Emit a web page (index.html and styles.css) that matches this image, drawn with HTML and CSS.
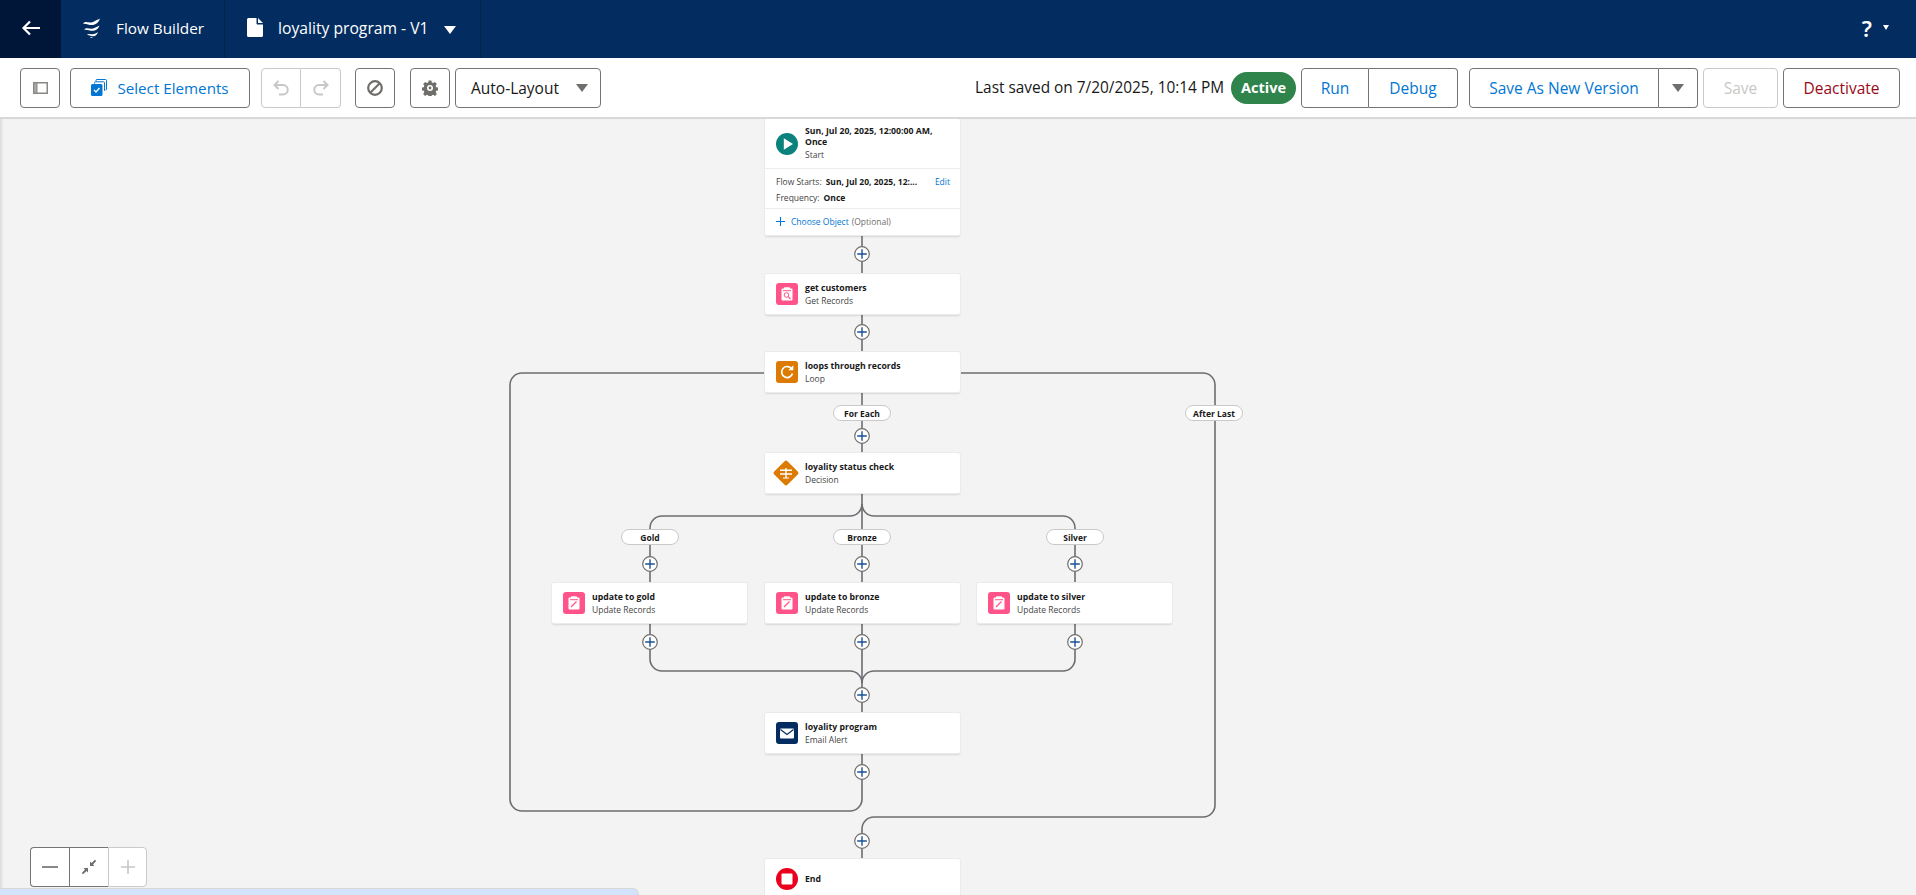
FILE: index.html
```html
<!DOCTYPE html>
<html lang="en">
<head>
<meta charset="UTF-8">
<title>Flow Builder</title>
<link rel="stylesheet" href="styles.css">
</head>
<body>

<svg class="icon-defs" width="0" height="0">
    <symbol id="i-clipboard" viewBox="0 0 22 22">
        <rect width="22" height="22" rx="3" fill="#ff538a"/>
        <path d="M6.5 5.5h1.5v-.5a.8.8 0 0 1 .8-.8h4.4a.8.8 0 0 1 .8.8v.5h1.5a1 1 0 0 1 1 1v10a1 1 0 0 1-1 1h-9a1 1 0 0 1-1-1v-10a1 1 0 0 1 1-1z" fill="#fff"/>
        <rect x="7" y="7.2" width="8" height="1" fill="#ff538a"/>
    </symbol>
    <symbol id="i-plus" viewBox="0 0 16 16">
        <circle cx="8" cy="8" r="7.3" fill="#fff" stroke="#706e6b" stroke-width="1.2"/>
        <path d="M8 3.200v9.600M3.200 8h9.600" stroke="#1b5297" stroke-width="1.400" fill="none"/>
    </symbol>
</svg>

<header class="app-header">
    <a class="app-header__back">
        <svg width="20" height="16" viewBox="0 0 20 16"><path d="M9 1.5 2.5 8 9 14.500M3 8h16" fill="none" stroke="#fff" stroke-width="2.200"/></svg>
    </a>
    <div class="app-header__section app-header__section--app">
        <svg class="flow-logo" width="19" height="20" viewBox="0 0 19 20"><path d="M1 6C3 1.500 7 6.500 12 3.500 14.500 2 16.500 1.500 18 .5 17 4 14 6.500 11 7 7.500 7.700 4 5 1 6zM2 12C4.500 8 8 12.500 13 9.800 15 8.700 16.500 8.300 17.500 7.500 16.500 11 14 12.300 11.500 12.800 8 13.300 5 11 2 12zM5 17C7 14.500 10 17.500 13.500 15.500 14.500 15 15.500 14.500 16 14 15 17 13 18 11.500 18.200 9.500 18.500 7 16.500 5 17zM8 19.800c1-.8 2-.3 3-.4-.8.600-2 .900-3 .4z" fill="#fff"/></svg>
        <span>Flow Builder</span>
    </div>
    <div class="app-header__section app-header__section--title">
        <svg width="16" height="19" viewBox="0 0 16 19"><path d="M1.500 0H9.500V5.500a1 1 0 0 0 1 1H16V17.500a1.500 1.500 0 0 1-1.500 1.500H1.500A1.500 1.500 0 0 1 0 17.500V1.500A1.500 1.500 0 0 1 1.500 0zM11 0l5 5h-5z" fill="#fff"/></svg>
        <span class="app-header__title">loyality program - V1</span>
        <span class="caret caret--white"></span>
    </div>
    <div class="app-header__help">
        <span class="help-mark">?</span>
        <span class="caret caret--small"></span>
    </div>
</header>

<div class="toolbar">
    <button class="btn btn--icon toolbar__panel">
        <svg width="15" height="12" viewBox="0 0 15 12"><rect width="15" height="12" fill="#8a8886"/><rect x="4.500" y="1.500" width="9" height="9" fill="#fff"/><rect x="1.200" y="1.500" width="2.300" height="9" fill="#a8a8a8"/></svg>
    </button>
    <button class="btn btn--blue toolbar__select">
        <svg width="16" height="17" viewBox="0 0 16 17"><path d="M5 2.500V1.500A1 1 0 0 1 6 .5h8.500a1 1 0 0 1 1 1V10a1 1 0 0 1-1 1" fill="none" stroke="#0176d3" stroke-width="1"/><path d="M3.500 4.500V3.800a1 1 0 0 1 1-1h8a1 1 0 0 1 1 1v8" fill="none" stroke="#0176d3" stroke-width="1"/><rect y="5" width="11.500" height="12" rx="1.500" fill="#0176d3"/><path d="M3 11l2 2 3.500-4" fill="none" stroke="#fff" stroke-width="1.300"/></svg>
        Select Elements
    </button>
    <div class="btn-group btn-group--disabled toolbar__history">
        <button class="btn btn--icon">
            <svg width="16" height="16" viewBox="0 0 16 16"><path d="M5.500 1 1.500 5l4 4M2 5h8a4.500 4.500 0 0 1 0 9.500H6" fill="none" stroke="#c9c7c5" stroke-width="2"/></svg>
        </button>
        <button class="btn btn--icon">
            <svg width="16" height="16" viewBox="0 0 16 16"><path d="M10.500 1l4 4-4 4M14 5H6a4.500 4.500 0 0 0 0 9.500h4" fill="none" stroke="#c9c7c5" stroke-width="2"/></svg>
        </button>
    </div>
    <button class="btn btn--icon toolbar__stop">
        <svg width="16" height="16" viewBox="0 0 16 16"><circle cx="8" cy="8" r="6.800" fill="none" stroke="#706e6b" stroke-width="2.200"/><path d="M3.500 12.500l9-9" stroke="#706e6b" stroke-width="2.200"/></svg>
    </button>
    <button class="btn btn--icon toolbar__gear">
        <svg width="16" height="16" viewBox="0 0 16 16"><path fill-rule="evenodd" d="M6.600.5h2.800l.4 2 1.300.6 1.800-1 1.900 2-1.100 1.700.5 1.400 2 .4v2.800l-2 .4-.5 1.300 1.100 1.800-1.900 2-1.800-1.100-1.300.5-.4 2H6.600l-.4-2-1.300-.5-1.800 1.100-1.900-2 1.100-1.800-.5-1.300-2-.4V7.600l2-.4.500-1.400-1.100-1.700 1.900-2 1.800 1 1.300-.6zM8 5a3 3 0 1 0 0 6 3 3 0 0 0 0-6z" fill="#706e6b"/><circle cx="8" cy="8" r="1.400" fill="#706e6b"/></svg>
    </button>
    <button class="btn toolbar__layout">
        Auto-Layout
        <span class="caret caret--grey"></span>
    </button>

    <div class="toolbar__right">
        <span class="last-saved">Last saved on 7/20/2025, 10:14 PM</span>
        <span class="status-pill">Active</span>
        <div class="btn-group toolbar__run">
            <button class="btn btn--blue toolbar__run-btn">Run</button>
            <button class="btn btn--blue toolbar__debug-btn">Debug</button>
        </div>
        <div class="btn-group toolbar__version">
            <button class="btn btn--blue toolbar__version-btn">Save As New Version</button>
            <button class="btn btn--icon toolbar__version-menu"><span class="caret caret--grey"></span></button>
        </div>
        <button class="btn btn--disabled toolbar__save">Save</button>
        <button class="btn btn--red toolbar__deactivate">Deactivate</button>
    </div>
</div>

<main class="canvas">

    <!-- connectors, viewBox uses page coordinates -->
    <svg class="canvas__lines" width="1916" height="776" viewBox="0 119 1916 776">
        <g fill="none" stroke="#6b6d70" stroke-width="1.600">
            <path d="M862 235V352M862 392V453M862 493V583M862 623V713M862 753V771"/>
            <path d="M765 373H522A12 12 0 0 0 510 385V799A12 12 0 0 0 522 811H850A12 12 0 0 0 862 799V771"/>
            <path d="M959 373H1203A12 12 0 0 1 1215 385V805A12 12 0 0 1 1203 817H874A12 12 0 0 0 862 829V859"/>
            <path d="M862 504A12 12 0 0 1 850 516H662A12 12 0 0 0 650 528V583"/>
            <path d="M862 504A12 12 0 0 0 874 516H1063A12 12 0 0 1 1075 528V583"/>
            <path d="M650 623V659A12 12 0 0 0 662 671H850A12 12 0 0 1 862 683"/>
            <path d="M1075 623V659A12 12 0 0 1 1063 671H874A12 12 0 0 0 862 683"/>
        </g>
        <use href="#i-plus" x="854" y="246" width="16" height="16"/>
        <use href="#i-plus" x="854" y="324" width="16" height="16"/>
        <use href="#i-plus" x="854" y="428" width="16" height="16"/>
        <use href="#i-plus" x="642" y="556" width="16" height="16"/>
        <use href="#i-plus" x="854" y="556" width="16" height="16"/>
        <use href="#i-plus" x="1067" y="556" width="16" height="16"/>
        <use href="#i-plus" x="642" y="634" width="16" height="16"/>
        <use href="#i-plus" x="854" y="634" width="16" height="16"/>
        <use href="#i-plus" x="1067" y="634" width="16" height="16"/>
        <use href="#i-plus" x="854" y="687" width="16" height="16"/>
        <use href="#i-plus" x="854" y="764" width="16" height="16"/>
        <use href="#i-plus" x="854" y="833" width="16" height="16"/>
    </svg>

    <!-- start element -->
    <div class="node node--start">
        <div class="node__head node__head--start">
            <svg class="node__icon" viewBox="0 0 22 22"><circle cx="11" cy="11" r="11" fill="#0b827c"/><path d="M7.800 5.300 17 11l-9.200 5.700z" fill="#fff"/></svg>
            <div class="node__text">
                <div class="node__title">Sun, Jul 20, 2025, 12:00:00 AM, Once</div>
                <div class="node__sub">Start</div>
            </div>
        </div>
        <div class="node__details">
            <div class="detail-row">
                <span>Flow Starts:</span>
                <b>Sun, Jul 20, 2025, 12:...</b>
                <a class="link detail-row__edit">Edit</a>
            </div>
            <div class="detail-row">
                <span>Frequency:</span>
                <b>Once</b>
            </div>
        </div>
        <div class="node__foot">
            <svg width="9" height="9" viewBox="0 0 9 9"><path d="M4.500 0v9M0 4.500h9" stroke="#0176d3" stroke-width="1.100"/></svg>
            <a class="link">Choose Object</a>
            <span class="node__optional">(Optional)</span>
        </div>
    </div>

    <div class="node node--get">
        <svg class="node__icon" viewBox="0 0 22 22"><use href="#i-clipboard"/><circle cx="10.500" cy="12" r="2.300" fill="none" stroke="#ff538a" stroke-width="1"/><path d="M12.200 13.700 14.500 16" stroke="#ff538a" stroke-width="1.100"/></svg>
        <div class="node__text">
            <div class="node__title">get customers</div>
            <div class="node__sub">Get Records</div>
        </div>
    </div>

    <div class="node node--loop">
        <svg class="node__icon" viewBox="0 0 22 22"><rect width="22" height="22" rx="3" fill="#dd7a01"/><path d="M15.800 8A5.500 5.500 0 1 0 16.500 12.500" fill="none" stroke="#fff" stroke-width="1.700"/><path d="M17.300 4.300V9.300H12.300z" fill="#fff"/></svg>
        <div class="node__text">
            <div class="node__title">loops through records</div>
            <div class="node__sub">Loop</div>
        </div>
    </div>

    <div class="node node--decision">
        <svg class="node__icon node__icon--wide" viewBox="0 0 26 26"><rect x="3.700" y="3.700" width="18.600" height="18.600" rx="2" transform="rotate(45 13 13)" fill="#dd7a01"/><path d="M7 9.500h12v1.600H7zM7 13.200h12v1.600H7zM12.300 8h1.400v9.500h-1.400zM10 17.500h6v1h-6z" fill="#fff"/></svg>
        <div class="node__text">
            <div class="node__title">loyality status check</div>
            <div class="node__sub">Decision</div>
        </div>
    </div>

    <div class="node node--gold">
        <svg class="node__icon" viewBox="0 0 22 22"><use href="#i-clipboard"/><path d="M8 15l5.500-5.500" stroke="#ff538a" stroke-width="1.300"/></svg>
        <div class="node__text">
            <div class="node__title">update to gold</div>
            <div class="node__sub">Update Records</div>
        </div>
    </div>

    <div class="node node--bronze">
        <svg class="node__icon" viewBox="0 0 22 22"><use href="#i-clipboard"/><path d="M8 15l5.500-5.500" stroke="#ff538a" stroke-width="1.300"/></svg>
        <div class="node__text">
            <div class="node__title">update to bronze</div>
            <div class="node__sub">Update Records</div>
        </div>
    </div>

    <div class="node node--silver">
        <svg class="node__icon" viewBox="0 0 22 22"><use href="#i-clipboard"/><path d="M8 15l5.500-5.500" stroke="#ff538a" stroke-width="1.300"/></svg>
        <div class="node__text">
            <div class="node__title">update to silver</div>
            <div class="node__sub">Update Records</div>
        </div>
    </div>

    <div class="node node--email">
        <svg class="node__icon" viewBox="0 0 22 22"><rect width="22" height="22" rx="3" fill="#032d60"/><rect x="4" y="6.500" width="14" height="10" rx="1" fill="#fff"/><path d="M4.500 7.500 11 12.500l6.500-5" fill="none" stroke="#032d60" stroke-width="1.200"/></svg>
        <div class="node__text">
            <div class="node__title">loyality program</div>
            <div class="node__sub">Email Alert</div>
        </div>
    </div>

    <div class="node node--end">
        <svg class="node__icon" viewBox="0 0 22 22"><circle cx="11" cy="11" r="11" fill="#ea001e"/><rect x="5.500" y="5.500" width="11" height="11" rx="1" fill="#fff"/></svg>
        <div class="node__text">
            <div class="node__title">End</div>
        </div>
    </div>

    <span class="pill pill--each">For Each</span>
    <span class="pill pill--last">After Last</span>
    <span class="pill pill--gold">Gold</span>
    <span class="pill pill--bronze">Bronze</span>
    <span class="pill pill--silver">Silver</span>

    <!-- zoom panel -->
    <div class="zoom">
        <button class="zoom__btn">
            <svg width="16" height="2" viewBox="0 0 16 2"><rect width="16" height="2" fill="#8a8886"/></svg>
        </button>
        <button class="zoom__btn">
            <svg width="16" height="16" viewBox="0 0 16 16"><path d="M9 7V2.500l1.500 1.500L14 .8 15.200 2 12 5.500 13.500 7zM7 9v4.500L5.500 12 2 15.200.8 14 4 10.500 2.500 9z" fill="#706e6b"/></svg>
        </button>
        <button class="zoom__btn zoom__btn--disabled">
            <svg width="16" height="16" viewBox="0 0 16 16"><path d="M8 1v14M1 8h14" stroke="#c9c7c5" stroke-width="1.600"/></svg>
        </button>
    </div>

    <div class="canvas__edge"></div>
    <div class="canvas__footbar"></div>
</main>

</body>
</html>
```

FILE: styles.css
```css
:root
{
    --navy: #032d60;
    --navy-dark: #001639;
    --btn-border: #747474;
    --btn-disabled: #c9c9c9;
    --blue: #0176d3;
    --canvas: #f3f3f3;
    --text: #181818;
    --ui-font: "Open Sans", "Noto Sans", "Liberation Sans", sans-serif;
}

*
{
    box-sizing: border-box;
}

html, body
{
    margin: 0;
    height: 100%;
    overflow: hidden;
}

body
{
    font-family: var(--ui-font);
    color: var(--text);
    background-color: var(--canvas);
}

.icon-defs
{
    position: absolute;
}

/* top bar */

.app-header
{
    display: flex;
    align-items: center;
    height: 58px;
    background-color: var(--navy);
    color: #fff;
    font-size: 15.300px;
}

.app-header__back
{
    display: flex;
    align-items: center;
    justify-content: center;
    width: 61px;
    height: 100%;
    padding-bottom: 3px;
    background-color: var(--navy-dark);
}

.app-header__section
{
    display: flex;
    align-items: center;
    height: 100%;
    padding-bottom: 3px;
    border-right: 1px solid #02234b;
}

.app-header__section--app
{
    width: 164px;
    padding-left: 21px;
    gap: 15px;
}

.app-header__section--title
{
    width: 256px;
    padding-left: 22px;
    gap: 15px;
}

.app-header__title
{
    font-size: 15.700px;
    width: 151px;
    white-space: nowrap;
}

.app-header__help
{
    display: flex;
    align-items: center;
    margin-left: auto;
    margin-right: 27px;
    padding-bottom: 3px;
    gap: 11px;
}

.help-mark
{
    font-family: "Noto Sans", sans-serif;
    font-size: 22px;
    font-weight: 600;
    line-height: 1;
}

.caret
{
    display: inline-block;
    width: 0;
    height: 0;
    border-left: 6.5px solid transparent;
    border-right: 6.5px solid transparent;
    border-top: 8px solid #706e6b;
}

.caret--white
{
    border-top-color: #fff;
    margin-top: 5px;
}

.caret--grey
{
    border-top-color: #706e6b;
}

.caret--small
{
    border-left-width: 3px;
    border-right-width: 3px;
    border-top: 5px solid #fff;
}

/* toolbar */

.toolbar
{
    display: flex;
    align-items: center;
    height: 61px;
    padding: 0 16px 0 20px;
    background-color: #fff;
    border-bottom: 2px solid #d8d8d8;
}

.toolbar__right
{
    display: flex;
    align-items: center;
    margin-left: auto;
}

.btn
{
    display: inline-flex;
    align-items: center;
    justify-content: center;
    height: 40px;
    padding: 0;
    background-color: #fff;
    border: 1px solid var(--btn-border);
    border-radius: 4px;
    font-family: var(--ui-font);
    font-size: 15.500px;
    color: var(--text);
}

.btn--icon
{
    width: 40px;
}

.btn--blue
{
    color: var(--blue);
}

.btn--red
{
    color: #980a18;
}

.btn--disabled
{
    color: #c9c7c5;
    border-color: var(--btn-disabled);
}

.btn-group
{
    display: flex;
}

.btn-group .btn
{
    border-radius: 0;
}

.btn-group .btn:first-child
{
    border-radius: 4px 0 0 4px;
}

.btn-group .btn:last-child
{
    border-radius: 0 4px 4px 0;
    border-left: none;
}

.btn-group--disabled .btn
{
    border-color: var(--btn-disabled);
}

.toolbar__select
{
    width: 180px;
    margin-left: 10px;
    gap: 10px;
    font-size: 15.200px;
}

.toolbar__history
{
    margin-left: 11px;
}

.toolbar__stop
{
    margin-left: 14px;
}

.toolbar__gear
{
    margin-left: 15px;
}

.toolbar__layout
{
    justify-content: flex-start;
    width: 146px;
    margin-left: 5px;
    padding-left: 15px;
    gap: 17px;
}

.last-saved
{
    font-size: 15.400px;
    white-space: nowrap;
}

.status-pill
{
    display: flex;
    align-items: center;
    justify-content: center;
    width: 65px;
    height: 32px;
    margin-left: 7px;
    border-radius: 16px;
    background-color: #2e844a;
    color: #fff;
    font-size: 14.500px;
    font-weight: 700;
}

.toolbar__run
{
    margin-left: 5px;
}

.toolbar__run-btn
{
    width: 68px;
}

.toolbar__debug-btn
{
    width: 89px;
}

.toolbar__version
{
    margin-left: 11px;
}

.toolbar__version-btn
{
    width: 190px;
}

.toolbar__version-menu
{
    width: 39px;
}

.toolbar__save
{
    width: 75px;
    margin-left: 5px;
}

.toolbar__deactivate
{
    width: 117px;
    margin-left: 5px;
}

/* canvas */

.canvas
{
    position: relative;
    height: 776px;
    overflow: hidden;
    background-color: var(--canvas);
}

.canvas__lines
{
    position: absolute;
    left: 0;
    top: 0;
}

.canvas__edge
{
    position: absolute;
    left: 0;
    top: 0;
    bottom: 0;
    width: 3px;
    background: linear-gradient(to right, #dcdcdc, #ececec);
}

.canvas__footbar
{
    position: absolute;
    left: 0;
    bottom: 0;
    width: 639px;
    height: 7px;
    background-color: #d3e3fb;
    border-top: 1px solid #d8d8d8;
    border-right: 1px solid #d8d8d8;
    border-top-right-radius: 6px;
}

/* flow elements */

.node
{
    position: absolute;
    display: flex;
    align-items: center;
    width: 195px;
    height: 40px;
    padding-left: 11px;
    background-color: #fff;
    border-radius: 2px;
    box-shadow: 0 0 0 1px #ebebeb, 0 2px 2px rgba(0, 0, 0, 0.12);
}

.node__icon
{
    flex: none;
    width: 22px;
    height: 22px;
    margin-right: 7px;
}

.node__icon--wide
{
    width: 26px;
    height: 26px;
    margin-left: -3px;
    margin-right: 6px;
}

.node__title
{
    margin-top: 1px;
    font-size: 8.700px;
    font-weight: 700;
    line-height: 13px;
}

.node__sub
{
    margin-top: -1px;
    font-size: 8.500px;
    line-height: 13px;
    color: #444;
}

.node--start
{
    display: block;
    left: 765px;
    top: 0;
    height: 116px;
    padding-left: 0;
}

.node--start .node__title
{
    margin-top: 0;
    line-height: 11px;
}

.node--start .node__sub
{
    margin-top: 0;
}

.node--get
{
    left: 765px;
    top: 155px;
}

.node--loop
{
    left: 765px;
    top: 233px;
}

.node--decision
{
    left: 765px;
    top: 334px;
}

.node--gold
{
    left: 552px;
    top: 464px;
}

.node--bronze
{
    left: 765px;
    top: 464px;
}

.node--silver
{
    left: 977px;
    top: 464px;
}

.node--email
{
    left: 765px;
    top: 594px;
}

.node--end
{
    left: 765px;
    top: 740px;
    height: 60px;
    align-items: flex-start;
    padding-top: 9px;
}

.node--end .node__title
{
    margin-top: 0;
    line-height: 22px;
}

.node__head--start
{
    display: flex;
    align-items: center;
    height: 50px;
    padding-left: 11px;
    padding-right: 8px;
    border-bottom: 1px solid #ececec;
}

.node__details
{
    height: 40px;
    padding: 4px 11px 0;
    font-size: 8.500px;
    border-bottom: 1px solid #ececec;
}

.detail-row
{
    display: flex;
    align-items: center;
    gap: 4px;
    height: 16px;
    color: #444;
}

.detail-row b
{
    color: var(--text);
}

.detail-row__edit
{
    margin-left: auto;
    margin-right: -1px;
}

.link
{
    color: var(--blue);
}

.node__foot
{
    display: flex;
    align-items: center;
    gap: 6px;
    height: 26px;
    padding-left: 11px;
    padding-bottom: 1px;
    font-size: 8.500px;
}

.node__optional
{
    margin-left: -3px;
    color: #706e6b;
}

.pill
{
    position: absolute;
    display: flex;
    align-items: center;
    justify-content: center;
    width: 58px;
    height: 16px;
    background-color: #fff;
    border: 1px solid #c9c9c9;
    border-radius: 8px;
    font-size: 8.500px;
    font-weight: 700;
}

.pill--each
{
    left: 833px;
    top: 286px;
}

.pill--last
{
    left: 1185px;
    top: 286px;
}

.pill--gold
{
    left: 621px;
    top: 410px;
}

.pill--bronze
{
    left: 833px;
    top: 410px;
}

.pill--silver
{
    left: 1046px;
    top: 410px;
}

/* zoom panel */

.zoom
{
    position: absolute;
    left: 30px;
    top: 728px;
    display: flex;
    height: 40px;
}

.zoom__btn
{
    display: flex;
    align-items: center;
    justify-content: center;
    width: 39px;
    padding: 0;
    background-color: #fff;
    border: 1px solid var(--btn-border);
    border-right: none;
}

.zoom__btn:first-child
{
    border-radius: 4px 0 0 4px;
}

.zoom__btn--disabled
{
    border: 1px solid var(--btn-disabled);
    border-radius: 0 4px 4px 0;
}
```
